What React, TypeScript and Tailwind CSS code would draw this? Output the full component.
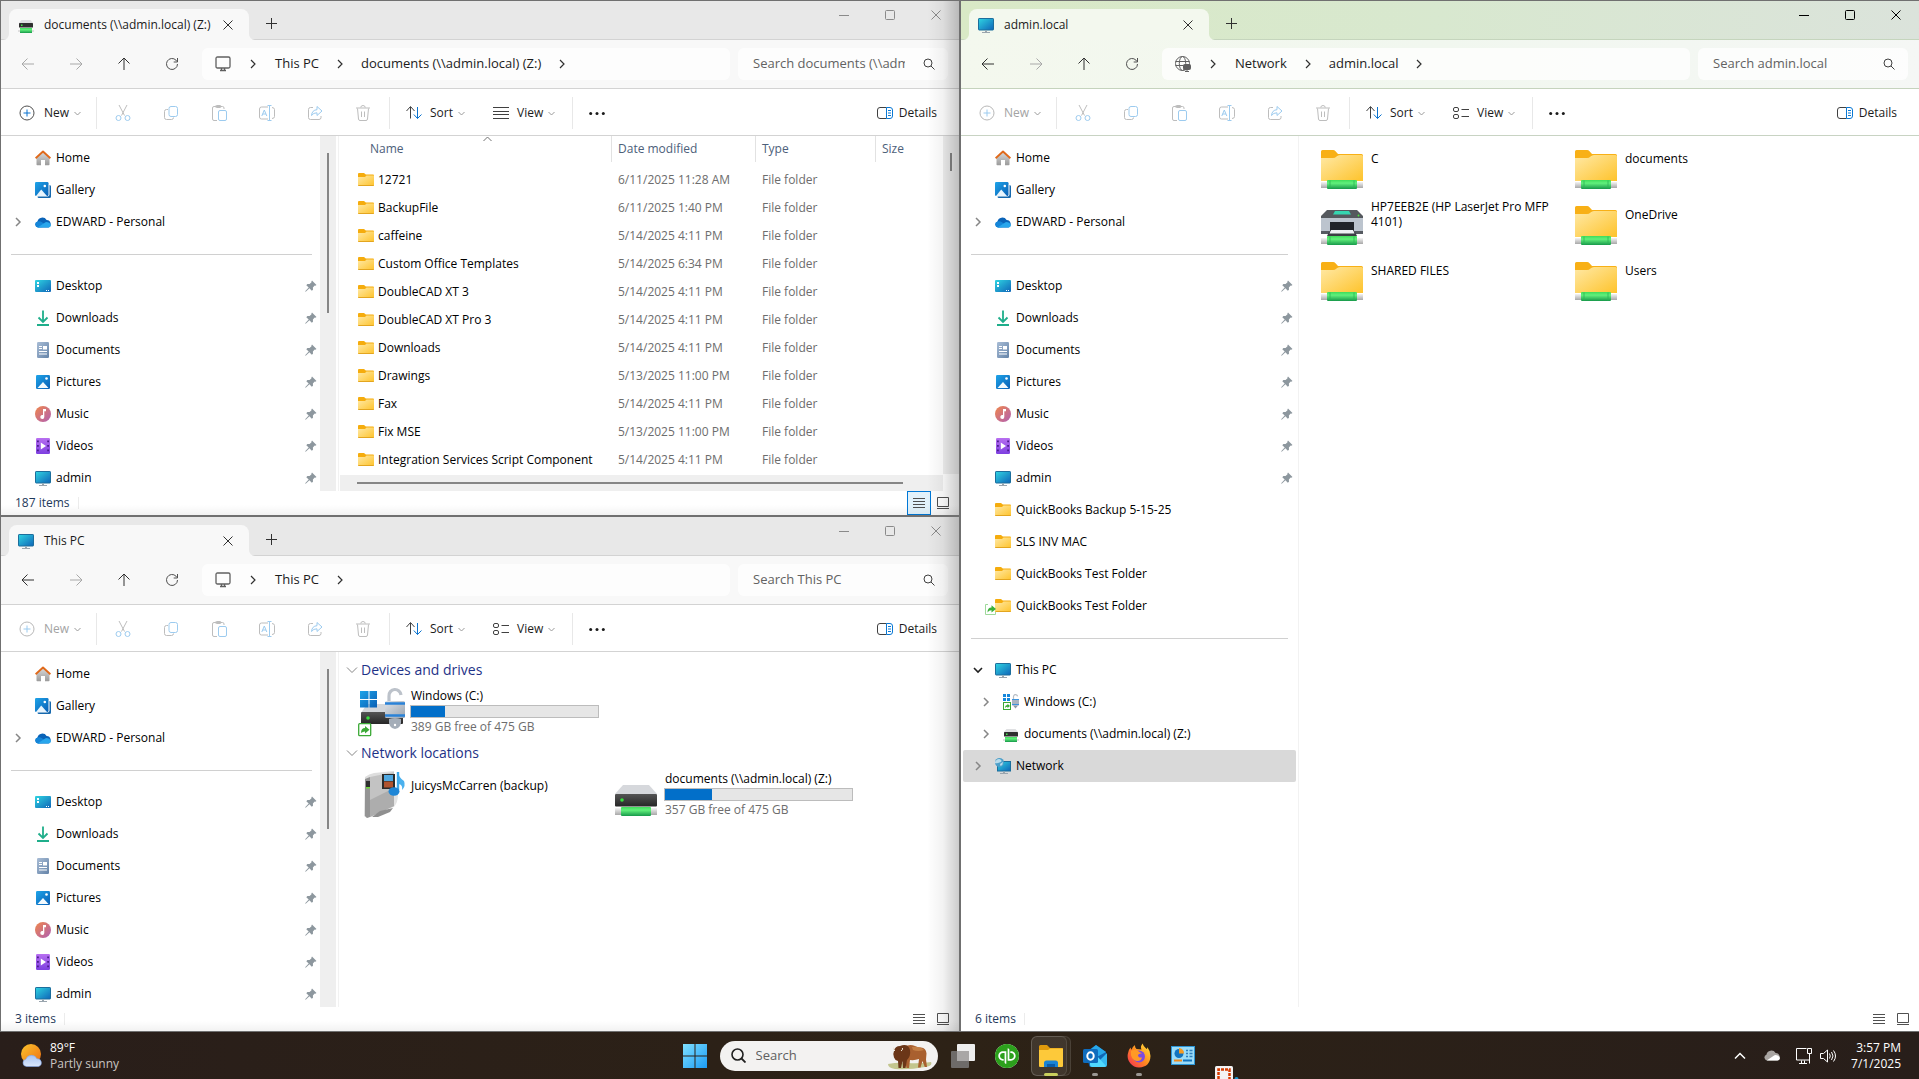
import type { ReactNode } from "react";
import { SiQuickbooks } from "react-icons/si";

type IconProps = { className?: string };

/* ---------- shared gradients ---------- */

function Gradients() {
  return (
    <svg className="absolute size-0" aria-hidden="true">
      <defs>
        <linearGradient id="folder" x1="0" y1="0" x2="1" y2="1">
          <stop offset="0" stopColor="#ffe9a6" />
          <stop offset="1" stopColor="#fec32b" />
        </linearGradient>
        <linearGradient id="screen" x1="0" y1="0" x2="1" y2="1">
          <stop offset="0" stopColor="#2fd5e2" />
          <stop offset="1" stopColor="#0f65b8" />
        </linearGradient>
        <linearGradient id="pipe" x1="0" y1="0" x2="0" y2="1">
          <stop offset="0" stopColor="#3fdc5a" />
          <stop offset="0.35" stopColor="#62f07c" />
          <stop offset="1" stopColor="#17994a" />
        </linearGradient>
        <linearGradient id="cap" x1="0" y1="0" x2="0" y2="1">
          <stop offset="0" stopColor="#f4f4f4" />
          <stop offset="1" stopColor="#a8a8a8" />
        </linearGradient>
        <linearGradient id="blue" x1="0" y1="0" x2="1" y2="1">
          <stop offset="0" stopColor="#1ea4e9" />
          <stop offset="1" stopColor="#0a5fb5" />
        </linearGradient>
        <linearGradient id="music" x1="0" y1="0" x2="1" y2="1">
          <stop offset="0" stopColor="#f0874a" />
          <stop offset="1" stopColor="#b05fb4" />
        </linearGradient>
        <linearGradient id="video" x1="0" y1="0" x2="0" y2="1">
          <stop offset="0" stopColor="#b86ff0" />
          <stop offset="1" stopColor="#7d3fe0" />
        </linearGradient>
        <linearGradient id="doc" x1="0" y1="0" x2="1" y2="1">
          <stop offset="0" stopColor="#a9bdd6" />
          <stop offset="1" stopColor="#6483a8" />
        </linearGradient>
        <linearGradient id="metal" x1="0" y1="0" x2="1" y2="1">
          <stop offset="0" stopColor="#dfe3e8" />
          <stop offset="1" stopColor="#9aa4b0" />
        </linearGradient>
        <linearGradient id="drive" x1="0" y1="0" x2="0" y2="1">
          <stop offset="0" stopColor="#555555" />
          <stop offset="1" stopColor="#262626" />
        </linearGradient>
        <linearGradient id="start" x1="0" y1="0" x2="1" y2="1">
          <stop offset="0" stopColor="#7fe0ff" />
          <stop offset="1" stopColor="#1b9bf5" />
        </linearGradient>
        <linearGradient id="sun" x1="0" y1="0" x2="1" y2="1">
          <stop offset="0" stopColor="#fcc52c" />
          <stop offset="1" stopColor="#ee6d12" />
        </linearGradient>
        <linearGradient id="cloud" x1="0" y1="0" x2="0" y2="1">
          <stop offset="0" stopColor="#a9c4f2" />
          <stop offset="1" stopColor="#dbe7fb" />
        </linearGradient>
        <linearGradient id="fire" x1="1" y1="0" x2="0" y2="1">
          <stop offset="0" stopColor="#ffe83c" />
          <stop offset="0.5" stopColor="#ff8a1f" />
          <stop offset="1" stopColor="#f5275a" />
        </linearGradient>
        <linearGradient id="house" x1="0" y1="0" x2="0" y2="1">
          <stop offset="0" stopColor="#dadada" />
          <stop offset="1" stopColor="#9a9a9a" />
        </linearGradient>
      </defs>
    </svg>
  );
}

/* ---------- small glyphs ---------- */

function Stroke({ size = 16, color = "#404040", className, children }: { size?: number; color?: string; className?: string; children: ReactNode }) {
  return (
    <svg width={size} height={size} viewBox={`0 0 ${size} ${size}`} fill="none" stroke={color} className={`shrink-0 ${className ?? ""}`} aria-hidden="true">
      {children}
    </svg>
  );
}

function ChevronDown() {
  return <Stroke size={7} color="#9a9a9a"><path d="M.5 2l3 3 3-3" /></Stroke>;
}

function CrumbChevron() {
  return <Stroke size={10} color="#303030"><path d="M3 1l4 4-4 4" strokeWidth="1.2" /></Stroke>;
}

function TreeChevron({ open }: { open?: boolean }) {
  return open ? (
    <Stroke size={10} color="#202020"><path d="M1 3l4 4 4-4" strokeWidth="1.6" /></Stroke>
  ) : (
    <Stroke size={10} color="#868686"><path d="M3 1l4 4-4 4" strokeWidth="1.5" /></Stroke>
  );
}

function CloseGlyph() {
  return <Stroke size={10} color="currentColor"><path d="M.5.5l9 9M9.5.5l-9 9" /></Stroke>;
}

function Pin() {
  return (
    <svg width="12" height="12" viewBox="0 0 12 12" className="ml-auto shrink-0" aria-hidden="true">
      <path d="M7 .5l4.500 4.400-1.200.8-.6-.1-1.800 1.900.1 2.200-1.200 1.100L4.400 8.300 1 11.600.2 11.800.4 11 3.700 7.600 1.300 5.200l1.100-1.200 2.200.1 1.900-1.900-.1-.7z" fill="#8d979e" />
    </svg>
  );
}

/* ---------- 16px place icons ---------- */

function HomeIcon() {
  return (
    <svg width="16" height="16" viewBox="0 0 16 16" aria-hidden="true">
      <path d="M1.500 7.500L8 2l6.500 5.500V14.500a.8.8 0 0 1-.8.8H10V10H6v5.300H2.300a.8.8 0 0 1-.8-.8z" fill="url(#house)" />
      <path d="M.6 8.200L8 1.500l7.400 6.700" fill="none" stroke="#e0691a" strokeWidth="1.900" strokeLinejoin="round" />
    </svg>
  );
}

function GalleryIcon() {
  return (
    <svg width="16" height="16" viewBox="0 0 16 16" aria-hidden="true">
      <path d="M14.500 3q1.500 0 1.500 1.500V14.500q0 1.500-1.500 1.500H4q-1.500 0-1.500-1.500h10q2 0 2-2z" fill="#1668ad" />
      <rect width="13.500" height="14" rx="1.200" fill="url(#blue)" />
      <path d="M1 14l5.200-6.500L12 14z" fill="#e9f5fd" />
      <circle cx="9.800" cy="4" r="1.300" fill="#fff" />
    </svg>
  );
}

function OneDriveIcon() {
  return (
    <svg width="16" height="11" viewBox="0 0 16 11" aria-hidden="true">
      <path d="M3 10.500a3 3 0 0 1-.6-5.800A5 5 0 0 1 11.600 3a4 4 0 0 1 2 7.500z" fill="#0a63b8" />
      <path d="M3 10.500A3 3 0 0 1 2.400 4.600q2.200-.9 4.200.4L13 9.500z" fill="#1485d8" />
      <path d="M2.600 10.600L10.500 5.200q4.200-.6 5.300 2.500.3 2.600-2.300 2.900z" fill="#28a6ec" />
    </svg>
  );
}

function DesktopIcon() {
  return (
    <svg width="16" height="16" viewBox="0 0 16 16" aria-hidden="true">
      <rect y="2" width="16" height="12" rx="1" fill="url(#screen)" />
      <path d="M2 4h2v2H2zM2 7h2v2H2z" fill="#fff" />
      <path d="M11 12h1v1h-1zM13 12h1v1h-1z" fill="#fff" />
    </svg>
  );
}

function DownloadIcon() {
  return (
    <svg width="16" height="16" viewBox="0 0 16 16" fill="none" stroke="#1fae8b" strokeWidth="1.800" aria-hidden="true">
      <path d="M8 .5v11M3.500 7.500L8 12l4.500-4.500M2 15h12" />
    </svg>
  );
}

function DocumentIcon() {
  return (
    <svg width="16" height="16" viewBox="0 0 16 16" aria-hidden="true">
      <rect x="2" width="12" height="16" rx="1.200" fill="url(#doc)" />
      <path d="M4 4h3v1H4zM4 6h3v1H4zM8 4h4v3.500H8zM4 9h8v1H4zM4 11.500h8v1H4z" fill="#fff" />
    </svg>
  );
}

function PicturesIcon() {
  return (
    <svg width="16" height="16" viewBox="0 0 16 16" aria-hidden="true">
      <rect x="1" y="1" width="14" height="14" rx="1.200" fill="url(#blue)" />
      <path d="M2.500 14L8 8l5.500 6z" fill="#f3fafe" />
      <circle cx="11.500" cy="4.500" r="1.300" fill="#fff" />
    </svg>
  );
}

function MusicIcon() {
  return (
    <svg width="16" height="16" viewBox="0 0 16 16" aria-hidden="true">
      <circle cx="8" cy="8" r="8" fill="url(#music)" />
      <path d="M8 3h3v2.200H9.300V11a2 2 0 1 1-1.300-1.900z" fill="#fff" />
    </svg>
  );
}

function VideosIcon() {
  return (
    <svg width="16" height="16" viewBox="0 0 16 16" aria-hidden="true">
      <rect x="1" width="14" height="16" rx="1.200" fill="url(#video)" />
      <path d="M2 2.500h1.800v1.800H2zM2 7h1.800v1.800H2zM2 11.500h1.800v1.800H2zM12.200 2.500H14v1.800h-1.800zM12.200 7H14v1.800h-1.800zM12.200 11.500H14v1.800h-1.800z" fill="#4a1c8c" />
      <path d="M5.800 4.500l5.200 3.500-5.200 3.500z" fill="#fff" />
    </svg>
  );
}

function MonitorIcon() {
  return (
    <svg width="16" height="16" viewBox="0 0 16 16" aria-hidden="true">
      <rect x=".5" y="1.500" width="15" height="11.500" rx=".6" fill="url(#screen)" stroke="#1c6e9c" />
      <path d="M7 13.500h2V15h3v1H4v-1h3z" fill="#9aa5ae" />
    </svg>
  );
}

function FolderIcon() {
  return (
    <svg width="16" height="16" viewBox="0 0 16 16" aria-hidden="true">
      <path d="M0 2q0-1 1-1h5l1.800 1.600H15q1 0 1 1V6H0z" fill="#f5ac0d" />
      <path d="M0 5h7l1.500-1.500H16V13q0 1-1 1H1q-1 0-1-1z" fill="url(#folder)" />
      <path d="M0 13q0 1 1 1h14q1 0 1-1z" fill="#e3a51f" />
    </svg>
  );
}

function NetDriveIcon() {
  return (
    <svg width="16" height="16" viewBox="0 0 16 16" aria-hidden="true">
      <path d="M3.500 3h9L15 6H1z" fill="#dfe0e2" />
      <rect x="1" y="6" width="14" height="4.500" rx=".6" fill="#2f2f2f" />
      <path d="M3 7.500h1.500V9H3z" fill="#44e04c" />
      <path d="M0 13.500h16v1H0z" fill="#c4c4c4" />
      <rect x="2" y="11" width="12" height="5" fill="url(#pipe)" />
    </svg>
  );
}

function WindowsDriveIcon() {
  return (
    <svg width="16" height="16" viewBox="0 0 16 16" aria-hidden="true">
      <path d="M0 0h3v3H0zM4 0h3v3H4zM0 4h3v3H0zM4 4h3v3H4z" fill="#1487dc" />
      <path d="M10.500 5V3a2 2 0 0 1 4-.6" fill="none" stroke="#b7bdc5" strokeWidth="1.200" />
      <rect x="9" y="5" width="7" height="6.500" fill="#a9b4c1" />
      <path d="M9 5.500h7M9 10.500h7" stroke="#3d93dd" />
      <path d="M10 11.500h5l-2.500 3z" fill="#8d98a5" />
      <rect x=".5" y="8.500" width="7" height="7" fill="#fff" stroke="#3ba936" />
      <path d="M2 14q0-3 2.500-3V9.800L7 12l-2.500 2v-1.300Q3 12.700 2 14z" fill="#3ba936" />
    </svg>
  );
}

function NetworkIcon() {
  return (
    <svg width="16" height="16" viewBox="0 0 16 16" aria-hidden="true">
      <rect x="2.500" y="3.500" width="13" height="9.500" fill="url(#screen)" stroke="#1c6e9c" />
      <path d="M8 13.500h2V15h3v1H5v-1h3z" fill="#9aa5ae" />
      <circle cx="4.500" cy="4.500" r="4.500" fill="#4c9fc9" />
      <path d="M1 2.500Q4 0 6 2T3 5 1 2.500zM5 6l3-2q0 3-2.500 4z" fill="#b9dcec" />
    </svg>
  );
}

function ShareBadge({ className }: IconProps) {
  return (
    <svg width="11" height="11" viewBox="0 0 11 11" className={className} aria-hidden="true">
      <path d="M3 .5H.5v10h10V8" fill="#fff" stroke="#9ed99b" />
      <path d="M2.500 8.500Q2.500 3.500 6.500 3.500V1.200L11 5 6.500 8.600V6.300Q4 6.200 2.500 8.500z" fill="#3bb03a" />
    </svg>
  );
}

/* ---------- large tile icons ---------- */

function Pipe() {
  return (
    <>
      <rect x="0" y="32" width="42" height="6" fill="url(#cap)" />
      <rect x="6" y="30" width="30" height="9" rx="1" fill="url(#pipe)" />
      <path d="M9 30.500v8M33 30.500v8" stroke="#2bb457" strokeWidth=".8" />
    </>
  );
}

function SharedFolderIcon() {
  return (
    <svg width="42" height="40" viewBox="0 0 42 40" aria-hidden="true">
      <path d="M0 1.500Q0 0 1.500 0H12q1.500 0 2.500 1.200L17 4h23.500Q42 4 42 5.500V12H0z" fill="#f8b016" />
      <path d="M0 8h12q2 0 3.500-1.500T19 5h21.500Q42 5 42 6.500V31H0z" fill="url(#folder)" />
      <Pipe />
    </svg>
  );
}

function PrinterIcon() {
  return (
    <svg width="42" height="40" viewBox="0 0 42 40" aria-hidden="true">
      <path d="M6 4h30l6 6v3H0v-3z" fill="#55595e" />
      <path d="M14 5h14l2 3.500H12z" fill="#35d6b0" />
      <circle cx="37.500" cy="9.500" r=".9" fill="#4eea3c" />
      <rect y="12" width="42" height="14" fill="#bcc4ce" />
      <rect y="25" width="42" height="3" fill="#555a61" />
      <rect x="9" y="16" width="24" height="9" fill="#22252a" />
      <path d="M8 26h26l2 4H6z" fill="#3b3e44" />
      <path d="M10 24h22l1.500 3.500h-25z" fill="#eef1f4" />
      <Pipe />
    </svg>
  );
}

function BigWindowsDrive() {
  return (
    <svg width="48" height="50" viewBox="0 0 48 50" aria-hidden="true">
      <path d="M9 17h30l6 9H3z" fill="#d3d6da" />
      <rect x="3" y="25" width="42" height="12" rx="1" fill="url(#drive)" />
      <circle cx="10" cy="31" r="1.800" fill="#37e03d" />
      <path d="M2 4h8.500v8H2zM11.500 4H19v8h-7.500zM2 13h8.500v7.500H2zM11.500 13H19v7.500h-7.500z" fill="url(#blue)" />
      <path d="M31 14V9a6 6 0 0 1 12-1" fill="none" stroke="#bcc2ca" strokeWidth="3.200" />
      <rect x="27" y="14" width="20" height="17" rx="1.500" fill="url(#metal)" />
      <path d="M27 16.500h20M27 28.500h20" stroke="#2a82d8" strokeWidth="2.400" />
      <path d="M31 32q6-2 12 0 1 9-6 10-7-1-6-10z" fill="#a4adb8" />
      <circle cx="37" cy="38" r="1.200" fill="#fff" />
      <rect x=".7" y="36.700" width="12" height="12" rx="1" fill="#fff" stroke="#3ba936" strokeWidth="1.300" />
      <path d="M3 46q0-5 4-5v-2l4.500 3.700L7 46.400v-2Q5 44.300 3 46z" fill="#3ba936" />
    </svg>
  );
}

function BigNetDrive() {
  return (
    <svg width="48" height="50" viewBox="0 0 48 50" aria-hidden="true">
      <path d="M11 15h26l8 9H3z" fill="#d6d8dc" />
      <rect x="3" y="24" width="42" height="12.500" rx="1" fill="url(#drive)" />
      <circle cx="10" cy="30" r="1.800" fill="#37e03d" />
      <rect x="3" y="38" width="42" height="7" fill="url(#cap)" />
      <rect x="9" y="37" width="30" height="9" rx="1" fill="url(#pipe)" />
    </svg>
  );
}

function MediaServerIcon() {
  return (
    <svg width="48" height="50" viewBox="0 0 48 50" aria-hidden="true">
      <path d="M22 42l14-5q4-5 4-12l-8-4z" fill="#e4e4e4" />
      <path d="M7 7q4-3 9-4l20-2v35l-16 7-11 5-3-2z" fill="#dedede" />
      <path d="M12 7l24-5v34l-24 11z" fill="#c3c3c3" />
      <path d="M12 30l24-12v18L12 47z" fill="#adadad" />
      <path d="M14 47l8-6 13-3-3 4-12 5z" fill="#8f8f8f" />
      <path d="M7 9l5-2v40l-3 1-2-2z" fill="#949494" />
      <rect x="8" y="11" width="4" height="6" fill="#2f2f2f" />
      <path d="M8 17h4v1.500H8z" fill="#6fdc3a" />
      <rect x="24" y="4" width="13" height="15" fill="#2b2b2b" />
      <rect x="26" y="5" width="9" height="6" fill="#4fa8e0" />
      <rect x="26" y="11.500" width="9" height="6" fill="#b0532f" />
      <path d="M40 2q1 6 6 9 2 5-2 9 1-5-3-6v6" fill="#4bb1ee" />
      <path d="M40 2v18" stroke="#3fa9ea" strokeWidth="2.400" />
      <ellipse cx="36" cy="21.500" rx="5.500" ry="4.200" fill="#1f86d6" />
    </svg>
  );
}

/* ---------- window chrome ---------- */

const chrome = {
  gray: {
    frame: "border",
    title: "bg-[#e8e8e8] border-[#d3d3d3]",
    tab: "bg-[#f8f8f8]",
    tabFlare: "#f8f8f8",
    nav: "bg-[#f8f8f8] border-[#d3d3d3]",
    toolbar: "border-[#d3d3d3]",
    controls: "text-[#8a8a8a]",
  },
  green: {
    frame: "border border-r-0",
    title: "bg-linear-to-r from-[#d9e9c6] via-[#d8e8cf] to-[#dbe3db] border-[#c5d5bd]",
    tab: "bg-[#f3f8ee]",
    tabFlare: "#f3f8ee",
    nav: "bg-linear-to-r from-[#f4f8ee] via-[#f1f7ef] to-[#f5f7f5] border-[#c5d3bd]",
    toolbar: "border-[#c8d3c3]",
    controls: "text-black",
  },
};

type WindowProps = {
  tone: "gray" | "green";
  title: string;
  tabIcon: ReactNode;
  place: ReactNode;
  crumbs: string[];
  canGoBack?: boolean;
  canCreate?: boolean;
  listView?: boolean;
  status: string;
  statusActive?: boolean;
  sidebar: ReactNode;
  children: ReactNode;
};

function TabBar({ tone, title, tabIcon }: Pick<WindowProps, "tone" | "title" | "tabIcon">) {
  const c = chrome[tone];
  return (
    <div className={`flex h-[39px] shrink-0 items-end border-b pl-2 ${c.title}`}>
      <div className={`relative -mb-px flex h-[31px] w-60 items-center rounded-t-lg pr-4 pl-[9px] ${c.tab}`}>
        <svg width="6" height="6" className="absolute bottom-0 -left-1.5" aria-hidden="true"><path d="M6 0v6H0a6 6 0 0 0 6-6z" fill={c.tabFlare} /></svg>
        <svg width="6" height="6" className="absolute -right-1.5 bottom-0" aria-hidden="true"><path d="M0 0v6h6a6 6 0 0 1-6-6z" fill={c.tabFlare} /></svg>
        {tabIcon}
        <span className="ml-2.5 flex-1 font-medium whitespace-nowrap text-[#1b1b1b]">{title}</span>
        <button type="button" aria-label="Close tab" className="text-[#303030]"><CloseGlyph /></button>
      </div>
      <button type="button" aria-label="New tab" className="flex h-[31px] w-11 items-center justify-center text-[#303030]">
        <Stroke size={11} color="currentColor"><path d="M5.500 0v11M0 5.500h11" /></Stroke>
      </button>
      <div className={`ml-auto flex self-start ${c.controls}`}>
        <button type="button" aria-label="Minimize" className="flex h-7 w-[46px] items-center justify-center"><Stroke size={10} color="currentColor"><path d="M0 5.500h10" /></Stroke></button>
        <button type="button" aria-label="Maximize" className="flex h-7 w-[46px] items-center justify-center"><Stroke size={10} color="currentColor"><rect x=".5" y=".5" width="9" height="9" rx="1" /></Stroke></button>
        <button type="button" aria-label="Close window" className="flex h-7 w-[46px] items-center justify-center"><CloseGlyph /></button>
      </div>
    </div>
  );
}

function NavBar({ tone, crumbs, place, canGoBack }: Pick<WindowProps, "tone" | "crumbs" | "place" | "canGoBack">) {
  const last = crumbs[crumbs.length - 1];
  const button = "flex h-8 w-12 items-center justify-center";
  return (
    <div className={`flex h-[49px] shrink-0 items-center border-b pr-[11px] pl-[3px] ${chrome[tone].nav}`}>
      <button type="button" aria-label="Back" className={button}><Stroke size={14} color={canGoBack ? "#303030" : "#a8a8a8"}><path d="M13 7H1M6.500 1.500L1 7l5.500 5.500" /></Stroke></button>
      <button type="button" aria-label="Forward" className={button}><Stroke size={14} color="#a8a8a8"><path d="M1 7h12M7.500 1.500L13 7l-5.500 5.500" /></Stroke></button>
      <button type="button" aria-label="Up" className={button}><Stroke size={14} color="#303030"><path d="M7 13V1M1.500 6.500L7 1l5.500 5.500" /></Stroke></button>
      <button type="button" aria-label="Refresh" className={button}><Stroke size={14} color="#505050"><path d="M12.500 7A5.500 5.500 0 1 1 11 3.200L12.500 4.800M12.500 1v4H8.700" /></Stroke></button>
      <nav aria-label="Address" className="ml-1.5 flex h-8 min-w-0 flex-1 items-center rounded-md bg-white/75 pl-[13px] text-[13px] text-[#1b1b1b]">
        {place}
        <span className="flex w-11 justify-center"><CrumbChevron /></span>
        {crumbs.map((crumb) => (
          <span key={crumb} className="flex items-center whitespace-nowrap">
            <button type="button">{crumb}</button>
            <span className="flex w-[42px] justify-center"><CrumbChevron /></span>
          </span>
        ))}
      </nav>
      <div className="ml-2 flex h-8 w-[210px] items-center rounded-md bg-white/75 pr-[13px] pl-[15px]">
        <input type="text" aria-label={`Search ${last}`} placeholder={`Search ${last}`} className="w-[152px] min-w-0 bg-transparent text-[13px] outline-none placeholder:text-[#626262]" />
        <Stroke size={12} color="#404040" className="ml-auto"><circle cx="5" cy="5" r="4" /><path d="M8 8l3.500 3.500" /></Stroke>
      </div>
    </div>
  );
}

const grayLine = "#bdbdbd";
const blueLine = "#9ccbef";

const editActions = [
  { label: "Cut", art: <><path d="M4 0l5.500 10.500M12 0L6.500 10.500" stroke={grayLine} /><circle cx="3.500" cy="13" r="2.500" stroke={blueLine} /><circle cx="12.500" cy="13" r="2.500" stroke={blueLine} /></> },
  { label: "Copy", art: <><path d="M5 4.500H3.500a2 2 0 0 0-2 2v6a2 2 0 0 0 2 2h5a2 2 0 0 0 2-2" stroke={grayLine} /><rect x="6" y="1.500" width="8.500" height="10" rx="2" stroke={blueLine} /></> },
  { label: "Paste", art: <><path d="M6 15.500H3a1.500 1.500 0 0 1-1.500-1.500V3A1.500 1.500 0 0 1 3 1.500h8.500A1.500 1.500 0 0 1 13 3v1" stroke={grayLine} /><path d="M4.500 1.500q0-1 1-1h3.500q1 0 1 1t-1 1H5.500q-1 0-1-1z" stroke={grayLine} /><rect x="7.500" y="5.500" width="8" height="10" rx="1.500" stroke={blueLine} /></> },
  { label: "Rename", art: <><path d="M9 2H2.500A2 2 0 0 0 .5 4v8a2 2 0 0 0 2 2H9M13 2.500q2.500.2 2.500 2v7q0 2-2.500 2" stroke={grayLine} /><path d="M8.500.5h4M8.500 15.500h4M10.500.5v15" stroke={blueLine} /><path d="M2.800 11L5.300 5l2.500 6M3.700 9h3.200" stroke={blueLine} /></> },
  { label: "Share", art: <><path d="M6 2.500H3.500a2 2 0 0 0-2 2v8a2 2 0 0 0 2 2h8.500a2 2 0 0 0 2-2V11" stroke={grayLine} /><path d="M4.500 10.500Q5 5 10 4.700V1.500L15 6l-5 4.500V7.800Q6.500 7.600 4.500 10.500z" stroke={blueLine} strokeLinejoin="round" /></> },
  { label: "Delete", art: <><path d="M1 3h14M5.800 2.500q0-2 2.200-2t2.200 2M2.500 3.500l1 10.500q.1 1.500 1.500 1.500h6q1.400 0 1.500-1.500l1-10.500M6.500 6.500v5.500M9.500 6.500v5.500" stroke={grayLine} /></> },
];

function Toolbar({ tone, canCreate, listView }: Pick<WindowProps, "tone" | "canCreate" | "listView">) {
  return (
    <div className={`flex h-[47px] shrink-0 items-center border-b bg-white pt-0.5 pr-[22px] pl-[18px] text-[#1b1b1b] ${chrome[tone].toolbar}`}>
      <button type="button" disabled={!canCreate} className="flex w-[77px] items-center gap-[9px] disabled:text-[#a3a3a3]">
        <Stroke color={canCreate ? "#505050" : "#b8b8b8"}>
          <circle cx="8" cy="8" r="7" />
          <path d="M8 4.500v7M4.500 8h7" stroke={canCreate ? "#0a73cf" : "#9ccbef"} />
        </Stroke>
        <span className="flex items-center gap-[5px]">New <ChevronDown /></span>
      </button>
      <span className="mr-0.5 h-8 w-px bg-[#e8e8e8]" />
      {editActions.map((action) => (
        <button key={action.label} type="button" disabled aria-label={action.label} className="flex h-8 w-12 items-center justify-center">
          <Stroke>{action.art}</Stroke>
        </button>
      ))}
      <span className="mr-4 ml-0.5 h-8 w-px bg-[#e8e8e8]" />
      <button type="button" className="flex w-[87px] items-center gap-2">
        <Stroke>
          <path d="M4.500 13.500V2M.5 6l4-4.500 4 4.500" />
          <path d="M11.500 2v11.500M7.800 9.500l3.700 4 4-4" stroke="#0a73cf" />
        </Stroke>
        <span className="flex items-center gap-[5px]">Sort <ChevronDown /></span>
      </button>
      <button type="button" className="flex w-[79px] items-center gap-2">
        <Stroke>
          {listView ? (
            <path d="M0 2.500h16M0 6.500h16M0 9.500h16M0 13.500h16" />
          ) : (
            <>
              <rect x=".5" y="2.500" width="5" height="4" rx="1.500" />
              <rect x=".5" y="9.500" width="5" height="4" rx="1.500" />
              <path d="M8.500 4.500H16M8.500 11.500H16" />
            </>
          )}
        </Stroke>
        <span className="flex items-center gap-[5px]">View <ChevronDown /></span>
      </button>
      <span className="mr-4 h-8 w-px bg-[#e8e8e8]" />
      <button type="button" aria-label="See more">
        <svg width="16" height="16" viewBox="0 0 16 16" fill="#1b1b1b" aria-hidden="true"><circle cx="1.700" cy="8.500" r="1.500" /><circle cx="8" cy="8.500" r="1.500" /><circle cx="14.300" cy="8.500" r="1.500" /></svg>
      </button>
      <button type="button" className="ml-auto flex items-center gap-1.5">
        <Stroke>
          <path d="M9.500 2.500H3a2.500 2.500 0 0 0-2.500 2.500v6A2.500 2.500 0 0 0 3 13.500h6.500" />
          <path d="M9.500 2.500H13A2.500 2.500 0 0 1 15.500 5v6a2.500 2.500 0 0 1-2.500 2.500H9.500zM11 5.500h3M11 8h3M11 10.500h3" stroke="#0a78d4" />
        </Stroke>
        Details
      </button>
    </div>
  );
}

function StatusBar({ status, statusActive }: Pick<WindowProps, "status" | "statusActive">) {
  return (
    <div className="flex h-6 shrink-0 items-center bg-white pr-1 pl-3.5">
      <span className="text-[#1e395b]">{status}</span>
      <span className="ml-2 h-3 w-px bg-[#ececec]" />
      <button type="button" aria-label="Details view" className={`ml-auto flex size-6 items-center justify-center ${statusActive ? "border border-[#0078d7] bg-[#e2f2fb]" : ""}`}>
        <Stroke size={12} color="#505050"><path d="M0 1.500h12M0 4.500h12M0 7.500h12M0 10.500h12" /></Stroke>
      </button>
      <button type="button" aria-label="Large icons view" className="flex size-6 items-center justify-center">
        <Stroke size={12} color="#505050"><path d="M.5.500h11v9H.5zM0 11.500h12" /></Stroke>
      </button>
    </div>
  );
}

function ExplorerWindow(props: WindowProps) {
  return (
    <section aria-label={props.title} className={`relative flex min-h-0 min-w-0 flex-1 flex-col overflow-hidden border-[#707070] bg-white ${chrome[props.tone].frame}`}>
      <TabBar tone={props.tone} title={props.title} tabIcon={props.tabIcon} />
      <NavBar tone={props.tone} crumbs={props.crumbs} place={props.place} canGoBack={props.canGoBack} />
      <Toolbar tone={props.tone} canCreate={props.canCreate} listView={props.listView} />
      <div className="flex min-h-0 flex-1">
        <aside className="flex w-[338px] shrink-0 border-r border-[#f2f2f2] px-0.5">{props.sidebar}</aside>
        <div className="min-w-0 flex-1">{props.children}</div>
      </div>
      <StatusBar status={props.status} statusActive={props.statusActive} />
      {props.tone === "gray" && (
        <>
          <div className="pointer-events-none absolute inset-y-0 right-0 w-8 bg-linear-to-l from-black/20 via-black/5 to-transparent" />
          <div className="pointer-events-none absolute inset-x-0 bottom-0 h-2.5 bg-linear-to-t from-black/5 to-transparent" />
        </>
      )}
    </section>
  );
}

/* ---------- navigation pane ---------- */

type Place = { name: string; icon: ReactNode; pinned?: boolean; shared?: boolean; tree?: "open" | "closed"; nested?: boolean; selected?: boolean };

const topPlaces: Place[] = [
  { name: "Home", icon: <HomeIcon /> },
  { name: "Gallery", icon: <GalleryIcon /> },
  { name: "EDWARD - Personal", icon: <OneDriveIcon />, tree: "closed" },
];

const pinnedPlaces: Place[] = [
  { name: "Desktop", icon: <DesktopIcon />, pinned: true },
  { name: "Downloads", icon: <DownloadIcon />, pinned: true },
  { name: "Documents", icon: <DocumentIcon />, pinned: true },
  { name: "Pictures", icon: <PicturesIcon />, pinned: true },
  { name: "Music", icon: <MusicIcon />, pinned: true },
  { name: "Videos", icon: <VideosIcon />, pinned: true },
  { name: "admin", icon: <MonitorIcon />, pinned: true },
];

const recentPlaces: Place[] = [
  { name: "QuickBooks Backup 5-15-25", icon: <FolderIcon /> },
  { name: "SLS INV MAC", icon: <FolderIcon /> },
  { name: "QuickBooks Test Folder", icon: <FolderIcon /> },
  { name: "QuickBooks Test Folder", icon: <FolderIcon />, shared: true },
];

const computerPlaces: Place[] = [
  { name: "This PC", icon: <MonitorIcon />, tree: "open" },
  { name: "Windows (C:)", icon: <WindowsDriveIcon />, tree: "closed", nested: true },
  { name: "documents (\\\\admin.local) (Z:)", icon: <NetDriveIcon />, tree: "closed", nested: true },
  { name: "Network", icon: <NetworkIcon />, tree: "closed", selected: true },
];

function PlaceRow({ place }: { place: Place }) {
  return (
    <li>
      <button
        type="button"
        className={`flex h-8 w-full items-center rounded-xs pr-[3px] text-left whitespace-nowrap ${place.nested ? "pl-[15px]" : "pl-[7px]"} ${place.selected ? "bg-[#d9d9d9]" : ""}`}
      >
        <span className="flex w-4 justify-center">{place.tree && <TreeChevron open={place.tree === "open"} />}</span>
        <span className="relative ml-[9px] flex w-4 shrink-0 justify-center">
          {place.icon}
          {place.shared && <ShareBadge className="absolute top-1.5 -left-2.5" />}
        </span>
        <span className="ml-[5px]">{place.name}</span>
        {place.pinned && <Pin />}
      </button>
    </li>
  );
}

function NavPane({ groups, scroll }: { groups: Place[][]; scroll?: boolean }) {
  return (
    <>
      <ul className="min-w-0 flex-1 overflow-hidden pt-1.5">
        {groups.map((group, index) => (
          <li key={index}>
            {index > 0 && <div className="mx-2 flex h-8 items-center"><hr className="flex-1 border-[#d0d0d0]" /></div>}
            <ul>
              {group.map((place, i) => <PlaceRow key={i} place={place} />)}
            </ul>
          </li>
        ))}
      </ul>
      {scroll && (
        <div className="flex w-4 justify-center bg-[#efefef] pt-[17px]">
          <div className="h-40 w-0.5 bg-[#868686]" />
        </div>
      )}
    </>
  );
}

/* ---------- documents share ---------- */

const files = [
  { name: "12721", modified: "6/11/2025 11:28 AM" },
  { name: "BackupFile", modified: "6/11/2025 1:40 PM" },
  { name: "caffeine", modified: "5/14/2025 4:11 PM" },
  { name: "Custom Office Templates", modified: "5/14/2025 6:34 PM" },
  { name: "DoubleCAD XT 3", modified: "5/14/2025 4:11 PM" },
  { name: "DoubleCAD XT Pro 3", modified: "5/14/2025 4:11 PM" },
  { name: "Downloads", modified: "5/14/2025 4:11 PM" },
  { name: "Drawings", modified: "5/13/2025 11:00 PM" },
  { name: "Fax", modified: "5/14/2025 4:11 PM" },
  { name: "Fix MSE", modified: "5/13/2025 11:00 PM" },
  { name: "Integration Services Script Component", modified: "5/14/2025 4:11 PM" },
];

function FileList() {
  const head = "h-[30px] p-0 align-top font-normal";
  const label = "flex h-[26px] items-center border-[#e2e2e2]";
  return (
    <div className="flex h-full pl-px">
      <div className="flex min-w-0 flex-1 flex-col">
        <div className="relative min-h-0 flex-1 overflow-hidden">
          <table className="w-full table-fixed border-collapse text-left whitespace-nowrap">
            <thead className="text-[#4c607a]">
              <tr>
                <th className={`w-[272px] ${head}`}><div className={`${label} border-r pl-[30px]`}>Name</div></th>
                <th className={`w-36 ${head}`}><div className={`${label} border-r pl-1.5`}>Date modified</div></th>
                <th className={`w-[120px] ${head}`}><div className={`${label} border-r pl-1.5`}>Type</div></th>
                <th className={head}><div className={`${label} pl-1.5`}>Size</div></th>
              </tr>
            </thead>
            <tbody>
              {files.map((file) => (
                <tr key={file.name}>
                  <td className="h-7 p-0 pl-[18px]"><span className="flex items-center gap-1"><FolderIcon />{file.name}</span></td>
                  <td className="p-0 pl-1.5 text-[#6d6d6d]">{file.modified}</td>
                  <td className="p-0 pl-1.5 text-[#6d6d6d]">File folder</td>
                  <td className="p-0" />
                </tr>
              ))}
            </tbody>
          </table>
          <Stroke size={9} color="#707070" className="absolute top-0 left-[143px]"><path d="M.5 5l4-4 4 4" /></Stroke>
        </div>
        <div className="flex h-4 shrink-0 items-center bg-[#efefef] pr-10 pl-[17px]">
          <div className="h-0.5 flex-1 bg-[#868686]" />
        </div>
      </div>
      <div className="mb-[17px] flex w-4 justify-center bg-[#efefef] pt-[17px]">
        <div className="h-[18px] w-0.5 bg-[#868686]" />
      </div>
    </div>
  );
}

/* ---------- this pc ---------- */

function GroupHeader({ children }: { children: ReactNode }) {
  return (
    <h2 className="flex h-8 items-center gap-[3px] pb-0.5 text-sm text-[#1e3287]">
      <Stroke size={12} color="#868686"><path d="M1 3.500l5 5 5-5" /></Stroke>
      {children}
    </h2>
  );
}

function DriveTile({ icon, name, used, free }: { icon: ReactNode; name: string; used: number; free: string }) {
  return (
    <div className="flex w-[254px] gap-1 leading-[18px]">
      <div className="w-12 shrink-0">{icon}</div>
      <div>
        <div className="pl-px">{name}</div>
        <div className="h-[13px] w-[189px] border border-[#bcbcbc] bg-[#e6e6e6]">
          <div className="h-full bg-[#026fc9]" style={{ width: `${used}%` }} />
        </div>
        <div className="pl-px text-[#6d6d6d]">{free}</div>
      </div>
    </div>
  );
}

function DriveList() {
  return (
    <div className="pt-[3px] pl-[7px]">
      <GroupHeader>Devices and drives</GroupHeader>
      <div className="flex h-[51px] pl-3">
        <DriveTile icon={<BigWindowsDrive />} name="Windows (C:)" used={18} free="389 GB free of 475 GB" />
      </div>
      <GroupHeader>Network locations</GroupHeader>
      <div className="flex h-[51px] pl-3">
        <div className="flex w-[254px] gap-[5px]">
          <MediaServerIcon />
          <span className="flex h-8 items-center">JuicysMcCarren (backup)</span>
        </div>
        <DriveTile icon={<BigNetDrive />} name={"documents (\\\\admin.local) (Z:)"} used={25} free="357 GB free of 475 GB" />
      </div>
    </div>
  );
}

/* ---------- network shares ---------- */

const shares = [
  { name: "C" },
  { name: "documents" },
  { name: "HP7EEB2E (HP LaserJet Pro MFP 4101)", printer: true },
  { name: "OneDrive" },
  { name: "SHARED FILES" },
  { name: "Users" },
];

function ShareGrid() {
  return (
    <ul className="grid grid-cols-[254px_254px] pt-2 pl-[22px]">
      {shares.map((share) => (
        <li key={share.name} className="flex h-14 gap-2">
          <span className="mt-1.5 shrink-0">{share.printer ? <PrinterIcon /> : <SharedFolderIcon />}</span>
          <span className="flex h-7 w-[190px] items-center leading-[15px]">{share.name}</span>
        </li>
      ))}
    </ul>
  );
}

/* ---------- taskbar ---------- */

function TaskSlot({ label, children, running }: { label: string; children: ReactNode; running?: boolean }) {
  return (
    <button type="button" aria-label={label} className="relative flex h-12 w-11 items-center justify-center">
      {children}
      {running && <span className="absolute bottom-1 h-[3px] w-1.5 rounded-full bg-[#9b9792]" />}
    </button>
  );
}

function Taskbar() {
  return (
    <footer className="grid h-[47px] shrink-0 grid-cols-[1fr_auto_1fr] overflow-hidden bg-linear-to-r from-[#291e1a] via-[#2d2216] to-[#281e1a] text-white">
      <button type="button" className="flex items-center gap-[7px] self-center justify-self-start pl-[21px] text-left leading-4">
        <svg width="22" height="24" viewBox="0 0 22 24" aria-hidden="true">
          <circle cx="10" cy="10" r="10" fill="url(#sun)" />
          <path d="M5.500 22.500a3.700 3.700 0 0 1-.6-7.300 6 6 0 0 1 11-.5 4 4 0 0 1 1.600 7.800z" fill="url(#cloud)" stroke="#7fa3e8" strokeWidth=".6" />
        </svg>
        <span>
          <span className="block">89°F</span>
          <span className="block text-[#c9c5c2]">Partly sunny</span>
        </span>
      </button>

      <div className="flex h-[47px] items-center">
        <button type="button" aria-label="Start" className="flex h-12 w-[49px] items-center justify-center">
          <svg width="24" height="24" viewBox="0 0 24 24" aria-hidden="true"><path d="M0 0h11.500v11.500H0zM12.500 0H24v11.500H12.500zM0 12.500h11.500V24H0zM12.500 12.500H24V24H12.500z" fill="url(#start)" /></svg>
        </button>
        <label className="flex h-[30px] w-[218px] items-center rounded-full bg-[#f3f2f1] pr-1.5 pl-[11px]">
          <Stroke size={15} color="#202020"><circle cx="6.500" cy="6.500" r="5.500" strokeWidth="1.600" /><path d="M10.500 10.500l4 4" strokeWidth="1.800" /></Stroke>
          <input type="text" aria-label="Search" placeholder="Search" className="ml-2.5 w-0 flex-1 bg-transparent text-[13px] text-black outline-none placeholder:text-[#606060]" />
          <svg width="44" height="28" viewBox="0 0 44 28" aria-hidden="true">
            <path d="M0 22q10-2 20-1t23-1q2 4-6 5-16 3-30 2Q0 26 0 22z" fill="#c3c68e" />
            <path d="M14 6q7-5 13-2 3 1.500 6 1.500 5 .5 5.500 6l-.5 6 1 7.500h-2.200L34.500 19l-2 6.500H30l1-8.500q-4 1.500-9 1l-1 8h-2.500L17 18z" fill="#a9602f" />
            <path d="M6 9q1-5 6-5 8-3 10 4 1 6-3 10l-1.500 8H15l-.5-7-1.500 7h-2.500l-.5-7q-3-.5-4-3.500Q4.500 12 6 9z" fill="#6b3618" />
            <path d="M24 5q8-1 12 3-6 2-11 0z" fill="#c47f45" />
            <path d="M7 9Q5 8 5.500 5.500M13 9q2-1 1.500-3" fill="none" stroke="#efe6d6" />
          </svg>
        </label>
        <span className="w-[3px]" />
        <TaskSlot label="Task view">
          <svg width="24" height="24" viewBox="0 0 24 24" aria-hidden="true"><rect x="6" width="18" height="17" rx="1" fill="#eeeeee" /><rect y="7" width="18" height="17" rx="1" fill="#6e6b69" /><rect x="6" y="7" width="12" height="10" fill="#a9a7a6" /></svg>
        </TaskSlot>
        <TaskSlot label="QuickBooks"><span className="rounded-full bg-white"><SiQuickbooks size={24} color="#2ca01c" /></span></TaskSlot>
        <button type="button" aria-label="File Explorer" className="relative flex h-12 w-11 items-center justify-center">
          <span className="absolute inset-y-1 left-0.5 w-10 rounded-md border border-white/10 bg-white/5" />
          <span className="absolute inset-y-1 left-0.5 w-9 rounded-md border border-white/10 bg-white/5" />
          <svg width="26" height="24" viewBox="0 0 26 24" className="relative" aria-hidden="true">
            <path d="M1 2.500Q1 1 2.500 1H9l3 3h12q1 0 1 1v4H1z" fill="#e09a0c" />
            <path d="M1 6h9l2-1.500h13V22q0 1-1 1H2q-1 0-1-1z" fill="#fdc93a" />
            <path d="M6 23v-4q0-2.500 2.500-2.500h9Q20 16.500 20 19v4z" fill="#1a83d4" />
            <path d="M9 20h8v3H9z" fill="#0a5ba8" />
          </svg>
          <span className="absolute bottom-1 h-[3px] w-3.5 rounded-full bg-[#c9cf5d]" />
        </button>
        <TaskSlot label="Outlook" running>
          <svg width="24" height="24" viewBox="0 0 24 24" aria-hidden="true">
            <path d="M3 8L13 1l10 7v13q0 2-2 2H8q-2 0-2-2z" fill="#1066b5" />
            <path d="M8 5l5-4 10 7-11 6z" fill="#28a8ea" />
            <path d="M24 9v12q0 2-2 2H10z" fill="#35b8f1" />
            <path d="M7 15l7-3 9 10q-1 1-2 1H9q-2 0-2-2z" fill="#50d9ff" />
            <rect y="5" width="15" height="14" rx="1.500" fill="#0f6cbd" />
            <ellipse cx="7.500" cy="12" rx="3.200" ry="3.800" fill="none" stroke="#fff" strokeWidth="2" />
          </svg>
        </TaskSlot>
        <TaskSlot label="Firefox" running>
          <svg width="24" height="25" viewBox="0 0 24 25" aria-hidden="true">
            <path d="M12 24.500A11.500 11.500 0 0 1 .8 11Q1.200 7 3.500 4.500q.3 1.500 1 2.300Q5.500 3.500 8 2q-.3 2.500 1.500 4l5 .5Q13 4 15.500.5q1 3 4 5.500 1-.5.800-2Q23.500 8 23.500 13 23 24 12 24.500z" fill="url(#fire)" />
            <circle cx="12" cy="13.500" r="6" fill="#7b4be0" />
            <path d="M4 8q4-2 7 0l4 2.500q-3-.5-4 1.500 0 3 4 2.500-1 4-5.500 3.500Q3 16 4 8z" fill="#ff9a25" />
          </svg>
        </TaskSlot>
        <TaskSlot label="Control Panel">
          <svg width="24" height="19" viewBox="0 0 24 19" aria-hidden="true">
            <rect x=".5" y=".5" width="23" height="18" fill="#9bdcf9" stroke="#2b95d6" />
            <circle cx="8" cy="7.500" r="4.500" fill="#1274c0" /><path d="M8 7.500V2a5 5 0 0 1 5 5.500z" fill="#f59a23" />
            <path d="M15 4.500h2M18.500 4.500h3M15 7.500h2M18.500 7.500h3M15 10.500h2M18.500 10.500h3" stroke="#2f7fbf" strokeWidth="1.500" />
            <path d="M3 14.500h8" stroke="#f08a1c" strokeWidth="2" /><path d="M12 14.500h9" stroke="#1274c0" strokeWidth="2" />
          </svg>
        </TaskSlot>
        <button type="button" aria-label="Snipping Tool" className="flex h-[47px] w-11 items-end pl-2.5">
          <svg width="24" height="13" viewBox="0 0 24 13" aria-hidden="true">
            <rect width="18" height="18" rx="1.500" fill="#f4f4f4" />
            <path d="M3.500 13V3.500h11V13" fill="none" stroke="#d83b01" strokeWidth="2.500" strokeDasharray="3 1" />
            <circle cx="21.500" cy="13" r="2" fill="#1b9bd8" />
          </svg>
        </button>
      </div>

      <div className="flex items-center justify-end pr-[18px]">
        <button type="button" aria-label="Show hidden icons" className="mr-[18px]"><Stroke size={12} color="#ffffff"><path d="M1 8.500l5-5 5 5" strokeWidth="1.500" /></Stroke></button>
        <button type="button" aria-label="OneDrive" className="mr-4">
          <svg width="16" height="11" viewBox="0 0 16 11" aria-hidden="true">
            <path d="M3 10.500a3 3 0 0 1-.6-5.800A5 5 0 0 1 11.600 3a4 4 0 0 1 2 7.500z" fill="#a9a5a2" />
            <path d="M2.600 10.600L10.500 5.200q4.200-.6 5.300 2.500.3 2.600-2.300 2.900z" fill="#fff" />
          </svg>
        </button>
        <button type="button" aria-label="Network and volume" className="mr-[15px] flex items-center gap-2">
          <Stroke color="#ffffff"><path d="M10.500.5H.5v11.500h12.500M3 15.500h8M5.500 12.500v3M8.500 12.500v3M11.500.5h4v5h-4zM13.500 5.500v10" /></Stroke>
          <Stroke color="#ffffff"><path d="M.5 5.500v5h3l4 3.500V2L3.500 5.500zM9.500 5.500q1.500 2.500 0 5M11.500 4q3 4 0 8M13.500 2.500q4 5.500 0 11" /></Stroke>
        </button>
        <button type="button" className="text-right leading-4">
          <span className="block">3:57 PM</span>
          <span className="block">7/1/2025</span>
        </button>
      </div>
    </footer>
  );
}

function PcGlyph() {
  return <Stroke color="#606060"><path d="M2.500 1h11Q15 1 15 2.500v8q0 1.500-1.500 1.500h-11Q1 12 1 10.500v-8Q1 1 2.500 1zM5 14.500h6M6.500 12v2.500M9.500 12v2.500" strokeWidth="1.300" /></Stroke>;
}

function GlobeGlyph() {
  return (
    <Stroke color="#606060">
      <circle cx="7.500" cy="7.500" r="7" />
      <ellipse cx="7.500" cy="7.500" rx="3.200" ry="7" />
      <path d="M.5 5.500h14M.5 9.500h8" />
      <rect x="8.500" y="8.500" width="7" height="5" rx="1" fill="#606060" />
      <path d="M12 13.500v2M10 15.500h4" />
    </Stroke>
  );
}

export default function App() {
  const quickAccess = [topPlaces, pinnedPlaces];
  return (
    <div className="flex h-screen w-full flex-col overflow-hidden bg-white font-['Open_Sans','Noto_Sans',sans-serif] text-xs text-black">
      <Gradients />
      <main className="grid min-h-0 flex-1 grid-cols-[960fr_959fr]">
        <div className="flex min-h-0 min-w-0 flex-col">
          <ExplorerWindow
            tone="gray"
            title={"documents (\\\\admin.local) (Z:)"}
            tabIcon={<NetDriveIcon />}
            place={<PcGlyph />}
            crumbs={["This PC", "documents (\\\\admin.local) (Z:)"]}
            canCreate
            listView
            status="187 items"
            statusActive
            sidebar={<NavPane groups={quickAccess} scroll />}
          >
            <FileList />
          </ExplorerWindow>
          <ExplorerWindow
            tone="gray"
            title="This PC"
            tabIcon={<MonitorIcon />}
            place={<PcGlyph />}
            crumbs={["This PC"]}
            canGoBack
            status="3 items"
            sidebar={<NavPane groups={quickAccess} scroll />}
          >
            <DriveList />
          </ExplorerWindow>
        </div>
        <ExplorerWindow
          tone="green"
          title="admin.local"
          tabIcon={<MonitorIcon />}
          place={<GlobeGlyph />}
          crumbs={["Network", "admin.local"]}
          canGoBack
          status="6 items"
          sidebar={<NavPane groups={[topPlaces, [...pinnedPlaces, ...recentPlaces], computerPlaces]} />}
        >
          <ShareGrid />
        </ExplorerWindow>
      </main>
      <Taskbar />
    </div>
  );
}
